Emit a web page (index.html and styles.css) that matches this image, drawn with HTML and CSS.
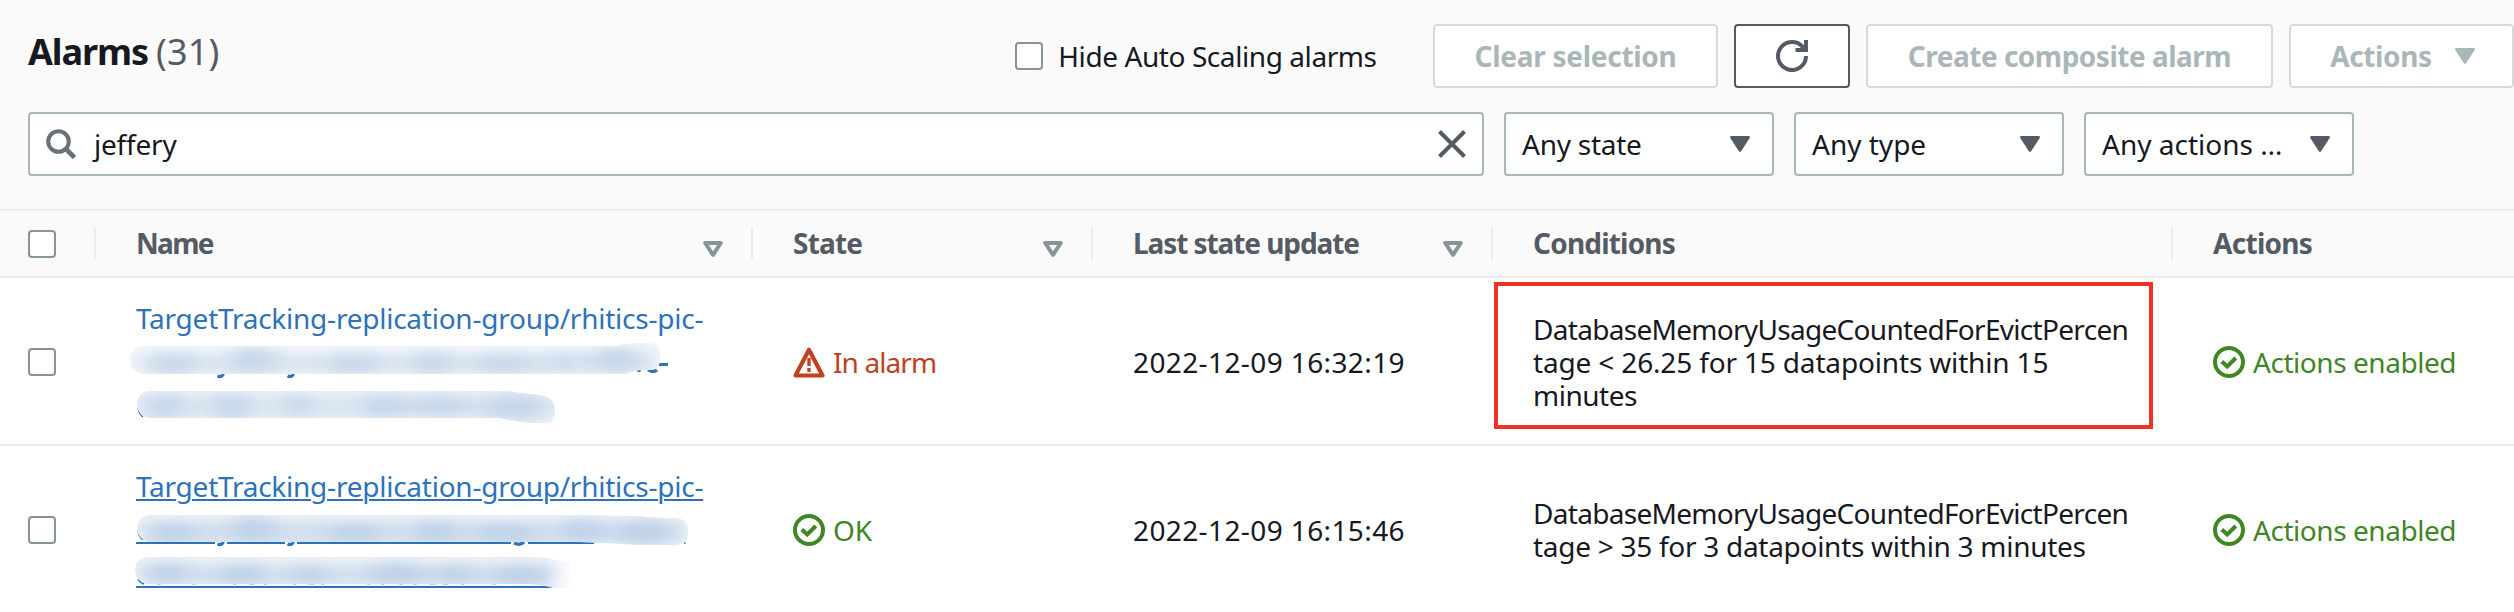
FILE: index.html
```html
<!DOCTYPE html>
<html lang="en">
<head>
<meta charset="utf-8">
<title>Alarms</title>
<link rel="stylesheet" href="styles.css">
</head>
<body>
<svg class="defs" width="0" height="0" aria-hidden="true">
  <symbol id="caret" viewBox="0 0 20 16"><path d="M1.5 0h17q2 0 1.2 2L11.3 15q-1.3 2-2.600 0L.3 2Q-.5 0 1.500 0z" fill="currentColor"/></symbol>
  <symbol id="sort" viewBox="0 0 20 16"><path d="M2.200 2h15.600L10 13.800z" fill="none" stroke="currentColor" stroke-width="4" stroke-linejoin="round"/></symbol>
  <symbol id="check" viewBox="0 0 32 32"><circle cx="16" cy="16" r="14" fill="none" stroke="currentColor" stroke-width="4"/><path d="M8.800 15.500l5.400 5L22.800 12" fill="none" stroke="currentColor" stroke-width="4"/></symbol>
</svg>

<header class="panel">
  <div class="toolbar">
    <h1 class="title"><span class="title-name">Alarms</span><span class="count">(31)</span></h1>
    <label class="hide"><span class="box"></span><span class="t-hide">Hide Auto Scaling alarms</span></label>
    <div class="buttons">
      <button class="btn btn-clear" disabled>Clear selection</button>
      <button class="btn btn-refresh" aria-label="Refresh">
        <svg width="32" height="32" viewBox="0 0 32 32" fill="none" stroke="currentColor" stroke-width="4"><path d="M30 16A14 14 0 1 1 27.500 8"/><path d="M30 0v10H19.500"/></svg>
      </button>
      <button class="btn btn-create" disabled>Create composite alarm</button>
      <button class="btn btn-actions" disabled>Actions<svg class="caret"><use href="#caret"/></svg></button>
    </div>
  </div>
  <div class="filters">
    <div class="field search">
      <svg width="31" height="31" viewBox="0 0 31 31" fill="none" stroke="#687078" stroke-width="4"><circle cx="12.500" cy="12.500" r="10.300"/><path d="M19.500 19.500L28.500 28.500" stroke-width="4.600"/></svg>
      <span class="query">jeffery</span>
      <svg width="28" height="28" viewBox="0 0 28 28" stroke="#545b64" stroke-width="4"><path d="M1.500 1.500l25 25M26.500 1.500l-25 25"/></svg>
    </div>
    <div class="field select"><span class="t-state">Any state</span><svg class="caret"><use href="#caret"/></svg></div>
    <div class="field select"><span>Any type</span><svg class="caret"><use href="#caret"/></svg></div>
    <div class="field select"><span>Any actions …</span><svg class="caret"><use href="#caret"/></svg></div>
  </div>
</header>

<main class="table">
  <div class="row head">
    <div class="cell pick"><span class="box"></span></div>
    <div class="cell"><span class="h-name">Name</span><svg class="sort"><use href="#sort"/></svg></div>
    <div class="cell"><span class="h-state">State</span><svg class="sort"><use href="#sort"/></svg></div>
    <div class="cell"><span class="h-last">Last state update</span><svg class="sort"><use href="#sort"/></svg></div>
    <div class="cell"><span class="h-cond">Conditions</span></div>
    <div class="cell"><span class="h-act">Actions</span></div>
  </div>

  <div class="row">
    <div class="cell pick"><span class="box"></span></div>
    <div class="cell name">
      <a class="link">TargetTracking-replication-group/rhitics-pic-</a>
      <svg class="smudge" viewBox="130 340 580 88">
        <defs>
          <filter id="soft" x="-30%" y="-60%" width="160%" height="220%"><feGaussianBlur stdDeviation="11 6"/></filter>
          <filter id="edge" x="-5%" y="-30%" width="110%" height="160%"><feGaussianBlur stdDeviation="8 4"/></filter>
          <clipPath id="a2"><path d="M142 346H616Q625 343 640 343H650Q660 343 660 354V360Q660 370 648 370H640Q632 371 626 374H142Q130 372 130 360T142 346z"/></clipPath>
          <clipPath id="a3"><path d="M148 391H508Q518 393 540 395Q555 398 555 410Q555 423 546 423H530Q512 421 500 418H148Q137 415 137 404T148 391z"/></clipPath>
        </defs>
        <g fill="none" stroke="#2e73b8" stroke-width="3.200">
          <path d="M217.500 376q5 2 6-3M287.500 376q5 2 6-3M648 370q5 3 9 0"/><path d="M659 364.500h9M639 369v3"/><path d="M138 408q1 6 5 9" stroke-width="1.500"/>
        </g>
        <g clip-path="url(#a2)"><path fill="#f0f4f9" d="M130 340h535v36H130z"/>
          <path filter="url(#edge)" fill="#dce6f1" d="M144 354H650V372H144z"/>
          <g filter="url(#soft)" fill="#c8d8ea"><ellipse cx="174" cy="364" rx="24" ry="10"/><ellipse cx="253" cy="360" rx="24" ry="13"/><ellipse cx="354" cy="364" rx="28" ry="9"/><ellipse cx="432" cy="363" rx="20" ry="11"/><ellipse cx="505" cy="364" rx="34" ry="8"/><ellipse cx="563" cy="362" rx="12" ry="9"/><ellipse cx="616" cy="360" rx="28" ry="12"/></g>
        </g>
        <g clip-path="url(#a3)"><path fill="#e8eff7" d="M135 388h425v38H135z"/>
          <path filter="url(#edge)" fill="#dce6f1" d="M145 397H545V416H145z"/>
          <g filter="url(#soft)" fill="#c6d7ea"><ellipse cx="166" cy="406" rx="20" ry="11"/><ellipse cx="231" cy="406" rx="20" ry="12"/><ellipse cx="298" cy="405" rx="14" ry="10"/><ellipse cx="384" cy="406" rx="23" ry="11"/><ellipse cx="440" cy="406" rx="32" ry="9"/><ellipse cx="514" cy="407" rx="34" ry="12"/></g>
        </g>
      </svg>
    </div>
    <div class="cell status alarm">
      <svg width="32" height="32" viewBox="0 0 32 32" fill="none" stroke="currentColor"><path d="M16 3.800L29.500 29.500H2.500z" stroke-width="4.200" stroke-linejoin="round"/><path d="M16 12v8M16 22v4" stroke-width="3.400"/></svg>
      <span class="t-alarm">In alarm</span>
    </div>
    <div class="cell"><span class="date">2022-12-09 16:32:19</span></div>
    <div class="cell cond marked">
      <p><span class="metric">DatabaseMemoryUsageCountedForEvictPercen</span><br><span class="c1">tage &lt; 26.25 for 15 datapoints within 15</span><br><span class="c2">minutes</span></p>
    </div>
    <div class="cell status ok"><svg width="32" height="32"><use href="#check"/></svg><span class="enabled">Actions enabled</span></div>
  </div>

  <div class="row">
    <div class="cell pick"><span class="box"></span></div>
    <div class="cell name">
      <a class="link hover">TargetTracking-replication-group/rhitics-pic-</a>
      <svg class="smudge" viewBox="130 508 580 88">
        <defs>
          <clipPath id="b2"><path d="M148 515H595Q620 516 640 516Q652 518 676 518Q688 519 688 530V534Q688 544 676 545H640Q610 543 580 542H148Q137 538 137 528T148 515z"/></clipPath>
          <clipPath id="b3"><path d="M146 557H540Q565 561 578 564V588H552Q545 585 530 584H146Q135 580 135 570T146 557z"/></clipPath>
          <linearGradient id="fade" gradientUnits="userSpaceOnUse" x1="545" x2="575" y1="0" y2="0"><stop offset="0" stop-color="#fff"/><stop offset="1" stop-color="#fff" stop-opacity="0"/></linearGradient>
          <mask id="fadeout" maskUnits="userSpaceOnUse" x="130" y="550" width="470" height="45"><path fill="url(#fade)" d="M130 550h470v45H130z"/></mask>
        </defs>
        <g fill="none" stroke="#2e73b8">
          <path stroke-width="2" d="M136 543H215M227 543H285M297 543H511M528 543H594M136 587H552"/>
          <path stroke-width="3.200" d="M217.500 544q5 2 6-3M287.500 544q5 2 6-3M514 543q6 3 10-1"/>
          <path stroke-width="1.500" d="M138 530q0 6 5 10M138 579q2 4 6 5M684 543h1.500"/>
          <path stroke-width="1" stroke-opacity=".35" d="M157 584.500h4M192 584.500h4M233 584.500h3M249 584.500h5M264 584.500h3M293 584.500h3M308 584.500h6M321 584.500h3M367 584.500h3M381 584.500h3M399 584.500h4M413 584.500h4M430 584.500h6M443 584.500h5M461 584.500h3M492 584.500h4"/>
        </g>
        <g clip-path="url(#b2)"><path fill="#eaf0f7" d="M130 512h562v36H130z"/>
          <path filter="url(#edge)" fill="#d3e0ee" d="M144 522H680V543H144z"/>
          <g filter="url(#soft)" fill="#bfd2e8"><ellipse cx="174" cy="533" rx="24" ry="9"/><ellipse cx="253" cy="529" rx="22" ry="12"/><ellipse cx="354" cy="533" rx="28" ry="8"/><ellipse cx="436" cy="532" rx="22" ry="10"/><ellipse cx="505" cy="533" rx="34" ry="8"/><ellipse cx="583" cy="530" rx="24" ry="10"/><ellipse cx="644" cy="532" rx="28" ry="11"/></g>
        </g>
        <g mask="url(#fadeout)"><g clip-path="url(#b3)"><path fill="#e8eff7" d="M130 552h460v38H130z"/>
          <path filter="url(#edge)" fill="#d3e0ee" d="M145 566H560V583H145z"/>
          <g filter="url(#soft)" fill="#bfd2e8"><ellipse cx="168" cy="573" rx="22" ry="9"/><ellipse cx="242" cy="575" rx="24" ry="10"/><ellipse cx="309" cy="575" rx="18" ry="9"/><ellipse cx="398" cy="574" rx="30" ry="10"/><ellipse cx="456" cy="575" rx="20" ry="9"/><ellipse cx="520" cy="576" rx="28" ry="10"/></g>
        </g></g>
      </svg>
    </div>
    <div class="cell status ok"><svg width="32" height="32"><use href="#check"/></svg><span>OK</span></div>
    <div class="cell"><span class="date">2022-12-09 16:15:46</span></div>
    <div class="cell cond">
      <p><span class="metric">DatabaseMemoryUsageCountedForEvictPercen</span><br><span class="c3">tage &gt; 35 for 3 datapoints within 3 minutes</span></p>
    </div>
    <div class="cell status ok"><svg width="32" height="32"><use href="#check"/></svg><span class="enabled">Actions enabled</span></div>
  </div>
</main>
</body>
</html>
```
FILE: styles.css
```css
*, *::after { box-sizing: border-box; }
body {
  margin: 0;
  width: 2514px;
  height: 612px;
  overflow: hidden;
  background: #fff;
  color: #16191f;
  font: 28px/33px "Noto Sans", "Open Sans", sans-serif;
  white-space: nowrap;
}
p { margin: 0; }
svg { display: block; flex: none; }
.defs { position: absolute; }

.panel {
  height: 209px;
  padding-top: 24px;
  background: #fafafa;
}
.toolbar {
  display: flex;
  align-items: center;
  height: 64px;
  padding-left: 28px;
}
.title {
  display: flex;
  gap: 8px;
  width: 988px;
  margin: 0 0 9px;
  font-size: 36px;
  line-height: 44px;
}
.title-name { letter-spacing: -1.1px; }
.count { font-weight: 400; color: #545b64; letter-spacing: .2px; }
.box {
  display: block;
  flex: none;
  width: 28px;
  height: 28px;
  border: 2px solid #879596;
  border-radius: 4px;
  background: #fff;
}
.hide {
  display: flex;
  align-items: center;
  gap: 15px;
  width: 418px;
}
.t-hide { letter-spacing: -.42px; }
.buttons { display: flex; gap: 16px; }
.btn {
  display: flex;
  flex: none;
  align-items: center;
  justify-content: center;
  height: 64px;
  padding: 0;
  border: 2px solid #545b64;
  border-radius: 4px;
  background: #fff;
  color: #545b64;
  font: 700 28px/33px "Noto Sans", "Open Sans", sans-serif;
}
.btn:disabled { border-color: #d5dbdb; color: #aab7b8; }
.btn-clear { width: 285px; letter-spacing: -.27px; }
.btn-refresh { width: 116px; }
.btn-create { width: 407px; letter-spacing: -.5px; }
.btn-actions { width: 225px; gap: 23px; padding-left: 2px; letter-spacing: -.4px; }
.caret { width: 20px; height: 16px; color: #545b64; }
.btn .caret { color: inherit; }

.filters {
  display: flex;
  gap: 20px;
  padding: 24px 0 0 28px;
}
.field {
  display: flex;
  align-items: center;
  height: 64px;
  border: 2px solid #aab7b8;
  border-radius: 4px;
  background: #fff;
}
.search { width: 1456px; padding: 0 16px; }
.query { flex: 1; margin-left: 17px; letter-spacing: -.2px; }
.select {
  justify-content: space-between;
  width: 270px;
  padding: 0 22px 0 16px;
}
.t-state { letter-spacing: -.25px; }

.row {
  display: grid;
  grid-template-columns: 94px 657px 340px 400px 680px 343px;
  height: 168px;
  box-shadow: inset 0 -2px #eaeded;
}
.row:last-child { box-shadow: none; }
.cell {
  display: flex;
  align-items: center;
  padding-left: 42px;
}
.cell.pick { padding-left: 28px; }
.head {
  align-items: center;
  height: 69px;
  border-top: 2px solid #eaeded;
  border-bottom: 2px solid #eaeded;
  box-shadow: none;
  background: #fafafa;
  color: #545b64;
  font-weight: 700;
}
.head .cell {
  justify-content: space-between;
  height: 33px;
  padding: 0 28px 0 40px;
  border-left: 2px solid #eaeded;
}
.head .pick { padding: 0 0 0 28px; border: 0; }
.sort { width: 20px; height: 16px; margin-top: 11px; color: #879596; }
.h-name { letter-spacing: -1.7px; }
.h-state { letter-spacing: -.8px; }
.h-last { letter-spacing: -1.08px; }
.h-cond { letter-spacing: -.8px; }
.h-act { letter-spacing: -.7px; }

.name {
  flex-direction: column;
  align-items: flex-start;
  justify-content: center;
}
.link {
  color: #2e73b8;
  line-height: 44px;
  letter-spacing: -.24px;
}
.hover {
  text-decoration: underline;
  text-decoration-thickness: 2px;
  text-underline-offset: 2px;
}
.smudge { width: 580px; height: 88px; margin-left: -6px; }

.status { gap: 8px; }
.alarm { color: #bf4023; }
.alarm span { letter-spacing: -.9px; }
.ok { color: #3f8624; }
.enabled { letter-spacing: -.45px; }
.date { letter-spacing: .39px; }
.cond { position: relative; }
.marked::after {
  content: "";
  position: absolute;
  left: 3px;
  top: 4px;
  width: 659px;
  height: 147px;
  border: 4px solid #ee3226;
}
.metric { letter-spacing: -.7px; }
.c1 { letter-spacing: -.16px; }
.c2 { letter-spacing: -.48px; }
.c3 { letter-spacing: -.28px; }
```
